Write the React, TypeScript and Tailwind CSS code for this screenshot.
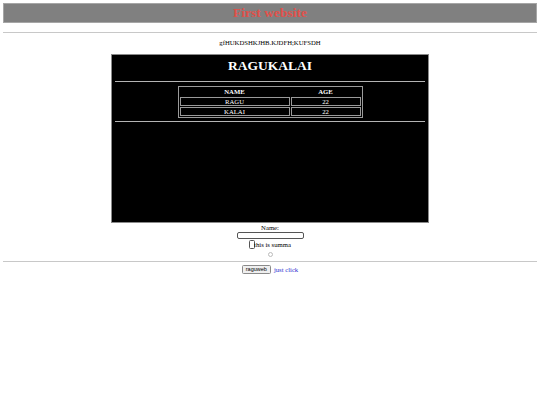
export default function App() {
  return (
    <main className="min-h-screen bg-white px-[3px] pt-[3px] text-[6.7px] leading-[8px] text-black [font-family:'Liberation_Serif','Times_New_Roman',serif]">
      <header className="flex h-[20px] items-center justify-center border border-[#a6a6a6] bg-[#808080]">
        <h1 className="text-[13.5px] font-bold leading-none text-[#e0504a]">First website</h1>
      </header>

      <hr className="mt-[9px] border-0 border-t border-[#c8c8c8]" />

      <p className="mt-[6px] text-center">gfHUKDSHKJHB.KJDFH;KUFSDH</p>

      <section className="mx-auto mt-[7px] h-[169px] w-[318px] border border-[#8a8a8a] bg-black px-[3px] text-white">
        <h2 className="pt-[3px] text-center text-[13.5px] font-bold leading-[16px]">RAGUKALAI</h2>
        <hr className="mt-[7px] border-0 border-t border-[#b4b4b4]" />

        <table className="mx-auto mt-[4px] w-[185px] border-separate border-spacing-[1px] border border-[#9a9a9a] text-center text-[6.7px] leading-[8px]">
          <thead>
            <tr>
              <th className="w-[110px] font-bold">NAME</th>
              <th className="font-bold">AGE</th>
            </tr>
          </thead>
          <tbody className="leading-[7px]">
            <tr>
              <td className="border border-[#9a9a9a]">RAGU</td>
              <td className="border border-[#9a9a9a]">22</td>
            </tr>
            <tr>
              <td className="border border-[#9a9a9a]">KALAI</td>
              <td className="border border-[#9a9a9a]">22</td>
            </tr>
          </tbody>
        </table>

        <hr className="mt-[3px] border-0 border-t border-[#b4b4b4]" />
      </section>

      <form className="flex flex-col items-center">
        <label className="mt-[1px]">Name:</label>
        <input
          type="text"
          className="h-[7px] w-[67px] rounded-[2px] border border-[#555] bg-white"
        />
        <div className="mt-[1px] flex items-end">
          <span className="mr-[-1px] h-[9px] w-[6px] rounded-[1.5px] border border-[#555] bg-white" />
          <span className="leading-[8px]">this is summa</span>
        </div>
        <span className="mt-[3px] h-[5px] w-[5px] rounded-full border border-[#bbb] bg-white" />
      </form>

      <hr className="mt-[4px] border-0 border-t border-[#c8c8c8]" />

      <div className="mt-[3px] flex items-center justify-center gap-[3px]">
        <button
          type="button"
          className="h-[9px] rounded-[1.5px] border border-[#8a8a8a] bg-[#efefef] px-[3px] text-[5.5px] leading-none [font-family:'Liberation_Sans',Arial,sans-serif]"
        >
          raguweb
        </button>
        <a href="#" className="text-[#3030d0]">just click</a>
      </div>
    </main>
  );
}
